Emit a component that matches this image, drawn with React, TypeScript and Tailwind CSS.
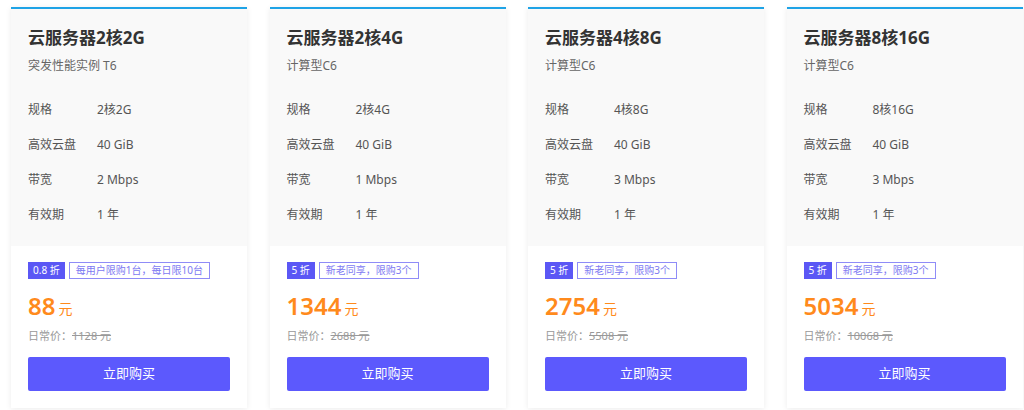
import React from 'react';

interface Plan {
  title: string;
  subtitle: string;
  spec: string;
  disk: string;
  bandwidth: string;
  period: string;
  discount: string;
  limit: string;
  price: string;
  original: string;
}

const plans: Plan[] = [
  {
    title: '云服务器2核2G',
    subtitle: '突发性能实例 T6',
    spec: '2核2G',
    disk: '40 GiB',
    bandwidth: '2 Mbps',
    period: '1 年',
    discount: '0.8 折',
    limit: '每用户限购1台，每日限10台',
    price: '88',
    original: '1128 元',
  },
  {
    title: '云服务器2核4G',
    subtitle: '计算型C6',
    spec: '2核4G',
    disk: '40 GiB',
    bandwidth: '1 Mbps',
    period: '1 年',
    discount: '5 折',
    limit: '新老同享，限购3个',
    price: '1344',
    original: '2688 元',
  },
  {
    title: '云服务器4核8G',
    subtitle: '计算型C6',
    spec: '4核8G',
    disk: '40 GiB',
    bandwidth: '3 Mbps',
    period: '1 年',
    discount: '5 折',
    limit: '新老同享，限购3个',
    price: '2754',
    original: '5508 元',
  },
  {
    title: '云服务器8核16G',
    subtitle: '计算型C6',
    spec: '8核16G',
    disk: '40 GiB',
    bandwidth: '3 Mbps',
    period: '1 年',
    discount: '5 折',
    limit: '新老同享，限购3个',
    price: '5034',
    original: '10068 元',
  },
];

function SpecRow({ label, value }: { label: string; value: string }) {
  return (
    <div className="flex h-[35px] items-center text-[12px] text-[#555]">
      <span className="w-[69px]">{label}</span>
      <span>{value}</span>
    </div>
  );
}

function PlanCard({ plan }: { plan: Plan }) {
  return (
    <div className="w-[236px] border-t-2 border-[#1ea3e6] bg-white shadow-[0_1px_6px_rgba(0,0,0,0.08)]">
      {/* Spec section */}
      <div className="bg-[#f9f9f9] px-[17px] pt-[17px] pb-[14px]">
        <h3 className="h-[24px] text-[17px] leading-[24px] font-bold text-[#333]">{plan.title}</h3>
        <p className="mt-[7px] h-[18px] text-[12px] leading-[18px] text-[#666]">{plan.subtitle}</p>
        <div className="mt-[17px]">
          <SpecRow label="规格" value={plan.spec} />
          <SpecRow label="高效云盘" value={plan.disk} />
          <SpecRow label="带宽" value={plan.bandwidth} />
          <SpecRow label="有效期" value={plan.period} />
        </div>
      </div>

      {/* Price section */}
      <div className="px-[17px] pt-[16px] pb-[17px]">
        <div className="flex h-[17px] items-center gap-[4px] text-[10px]">
          <span className="flex h-[17px] items-center bg-[#5b57f5] px-[5px] text-white">{plan.discount}</span>
          <span className="flex h-[17px] items-center border border-[#8f8cf7] px-[6px] text-[#7d79f2]">
            {plan.limit}
          </span>
        </div>
        <div className="mt-[12px] flex h-[30px] items-end text-[#ff8a1c]">
          <span className="text-[24px] leading-[30px] font-semibold">{plan.price}</span>
          <span className="ml-[3px] pb-[2px] text-[14px] leading-[20px]">元</span>
        </div>
        <div className="mt-[7px] h-[16px] text-[11px] leading-[16px] text-[#999]">
          日常价：<span className="line-through">{plan.original}</span>
        </div>
        <button className="mt-[13px] h-[34px] w-full rounded-[2px] bg-[#5c59fd] text-[13px] text-white">
          立即购买
        </button>
      </div>
    </div>
  );
}

export default function App() {
  return (
    <div
      className="h-[410px] w-[1024px] overflow-hidden bg-white pt-[7px] pl-[11px]"
      style={{ fontFamily: '"Noto Sans", "Noto Sans CJK SC", sans-serif' }}
    >
      <div className="flex gap-x-[22.5px]">
        {plans.map((plan) => (
          <PlanCard key={plan.title} plan={plan} />
        ))}
      </div>
    </div>
  );
}
